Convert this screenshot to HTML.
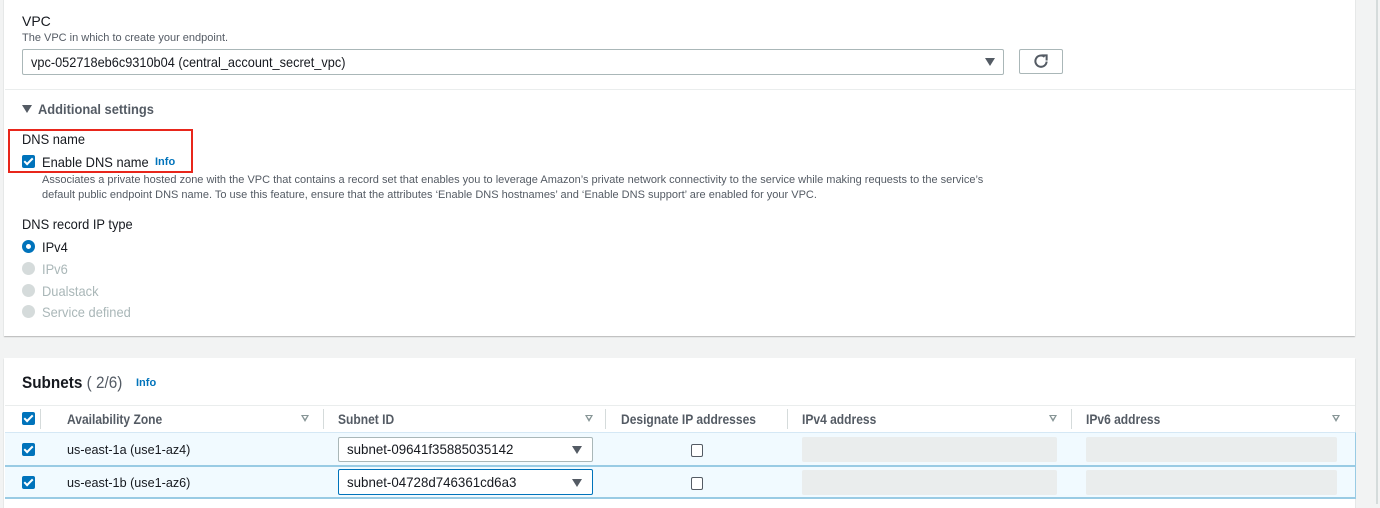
<!DOCTYPE html>
<html><head><meta charset="utf-8"><style>
*{box-sizing:border-box;margin:0;padding:0}
body{width:1380px;height:504px;overflow:hidden;background:#f2f3f3;font-family:"Liberation Sans",sans-serif;color:#16191f;position:relative}
.a{position:absolute;white-space:nowrap;transform-origin:0 50%}
.panel{position:absolute;background:#fff;box-shadow:0 1px 1px rgba(0,0,0,.25)}
.cb{position:absolute;width:13px;height:13px;background:#0073bb;border-radius:2px}
.cb:after{content:"";position:absolute;left:4px;top:1px;width:3px;height:7px;border:solid #fff;border-width:0 2px 2px 0;transform:rotate(45deg)}
.rad{position:absolute;width:13px;height:13px;border-radius:50%;background:#d5dbdb}
.n{font-weight:bold;color:#545b64;font-size:14px;transform:scaleX(.86)}
.s9{transform:scaleX(.92)}
.sel{position:absolute;border:1px solid #aab7b8;border-radius:2px;background:#fff;font-size:14px;padding-left:8px}
.sel span{display:inline-block;transform-origin:0 50%}
.tri{position:absolute;width:0;height:0;border-left:5px solid transparent;border-right:5px solid transparent;border-top:8px solid #545b64}
.ft{position:absolute;width:0;height:0;border-left:4px solid transparent;border-right:4px solid transparent;border-top:7px solid #879596}
.ft:after{content:"";position:absolute;left:-2px;top:-6px;border-left:2px solid transparent;border-right:2px solid transparent;border-top:3px solid #fff}
.sep{position:absolute;width:1px;height:20px;background:#d5dbdb}
.gray{position:absolute;background:#eaeded;border-radius:2px}
.box{position:absolute;width:12px;height:13px;border:1px solid #545b64;border-radius:2px;background:#fff}
</style></head><body>
<div class="panel" style="left:4px;top:-2px;width:1351px;height:338px"></div>
<div style="position:absolute;left:1376px;top:0;width:2px;height:504px;background:#d5dbdb"></div>
<div class="a" style="left:22px;top:13px;font-size:14px">VPC</div>
<div class="a" style="left:22px;top:32px;font-size:11px;color:#545b64">The VPC in which to create your endpoint.</div>
<div class="sel" style="left:22px;top:49px;width:982px;height:26px;line-height:24px"><span style="transform:scaleX(.91)">vpc-052718eb6c9310b04 (central_account_secret_vpc)</span></div>
<div class="tri" style="left:985px;top:58px"></div>
<div style="position:absolute;left:1019px;top:49px;width:44px;height:25px;border:1px solid #aab7b8;border-radius:2px;background:#fff"></div>
<svg class="a" style="left:1032px;top:52px" width="18" height="18" viewBox="0 0 16 16"><path d="M13 8.5a5 5 0 1 1-1.8-4.2" fill="none" stroke="#545b64" stroke-width="1.8"/><path d="M8.5 3h4.5V7.5" fill="none" stroke="#545b64" stroke-width="1.8"/></svg>
<div style="position:absolute;left:5px;top:89px;width:1350px;height:1px;background:#eaeded"></div>
<div class="tri" style="left:22px;top:105px"></div>
<div class="a s9" style="left:38px;top:101px;font-size:14px;font-weight:bold;color:#545b64">Additional settings</div>
<div style="position:absolute;left:8px;top:129px;width:185px;height:44px;border:2px solid #e8261b"></div>
<div class="a s9" style="left:22px;top:131px;font-size:14px">DNS name</div>
<div class="cb" style="left:22px;top:155px"></div>
<div class="a s9" style="left:42px;top:154px;font-size:14px">Enable DNS name</div>
<div class="a" style="left:155px;top:156px;font-size:11px;font-weight:bold;color:#0073bb">Info</div>
<div class="a" style="left:42px;top:173px;font-size:11px;color:#545b64;line-height:15px">Associates a private hosted zone with the VPC that contains a record set that enables you to leverage Amazon’s private network connectivity to the service while making requests to the service’s<br>default public endpoint DNS name. To use this feature, ensure that the attributes ‘Enable DNS hostnames’ and ‘Enable DNS support’ are enabled for your VPC.</div>
<div class="a s9" style="left:22px;top:216px;font-size:14px">DNS record IP type</div>
<div style="position:absolute;left:22px;top:240px;width:13px;height:13px;border-radius:50%;border:4px solid #0073bb;background:#fff"></div>
<div class="a s9" style="left:42px;top:239px;font-size:14px">IPv4</div>
<div class="rad" style="left:22px;top:262px"></div><div class="a s9" style="left:42px;top:261px;font-size:14px;color:#aab7b8">IPv6</div>
<div class="rad" style="left:22px;top:284px"></div><div class="a s9" style="left:42px;top:283px;font-size:14px;color:#aab7b8">Dualstack</div>
<div class="rad" style="left:22px;top:305px"></div><div class="a s9" style="left:42px;top:304px;font-size:14px;color:#aab7b8">Service defined</div>

<div class="panel" style="left:4px;top:358px;width:1351px;height:150px"></div>
<div class="a" style="left:22px;top:373px;font-size:17px;font-weight:bold;transform:scaleX(.9)">Subnets <span style="font-weight:normal;color:#545b64">( 2/6)</span></div>
<div class="a" style="left:136px;top:377px;font-size:11px;font-weight:bold;color:#0073bb">Info</div>
<div style="position:absolute;left:5px;top:405px;width:1350px;height:1px;background:#eaeded"></div>
<div class="cb" style="left:22px;top:412px"></div>
<div class="sep" style="left:40px;top:409px"></div>
<div class="a n" style="left:67px;top:411px">Availability Zone</div><div class="ft" style="left:301px;top:415px"></div>
<div class="sep" style="left:323px;top:409px"></div>
<div class="a n" style="left:338px;top:411px">Subnet ID</div><div class="ft" style="left:585px;top:415px"></div>
<div class="sep" style="left:605px;top:409px"></div>
<div class="a n" style="left:621px;top:411px">Designate IP addresses</div>
<div class="sep" style="left:787px;top:409px"></div>
<div class="a n" style="left:802px;top:411px">IPv4 address</div><div class="ft" style="left:1049px;top:415px"></div>
<div class="sep" style="left:1071px;top:409px"></div>
<div class="a n" style="left:1086px;top:411px">IPv6 address</div><div class="ft" style="left:1332px;top:415px"></div>

<div style="position:absolute;left:5px;top:432px;width:1351px;height:66px;background:#f1faff;border-top:1px solid #d5e8f5;border-right:1px solid #99cbe4"></div>
<div style="position:absolute;left:5px;top:465px;width:1351px;height:2px;background:#99cbe4"></div>
<div style="position:absolute;left:5px;top:497px;width:1351px;height:2px;background:#99cbe4"></div>
<div class="cb" style="left:22px;top:443px"></div>
<div class="a" style="left:67px;top:442px;font-size:13px;transform:scaleX(.97)">us-east-1a (use1-az4)</div>
<div class="sel" style="left:338px;top:437px;width:255px;height:25px;line-height:23px"><span style="transform:scaleX(.95)">subnet-09641f35885035142</span></div><div class="tri" style="left:572px;top:446px"></div>
<div class="box" style="left:691px;top:444px"></div>
<div class="gray" style="left:802px;top:437px;width:255px;height:25px"></div>
<div class="gray" style="left:1086px;top:437px;width:251px;height:25px"></div>
<div class="cb" style="left:22px;top:476px"></div>
<div class="a" style="left:67px;top:475px;font-size:13px;transform:scaleX(.97)">us-east-1b (use1-az6)</div>
<div class="sel" style="left:338px;top:469px;width:255px;height:26px;line-height:24px;border-color:#0073bb"><span style="transform:scaleX(.95)">subnet-04728d746361cd6a3</span></div><div class="tri" style="left:572px;top:479px"></div>
<div class="box" style="left:691px;top:477px"></div>
<div class="gray" style="left:802px;top:470px;width:255px;height:25px"></div>
<div class="gray" style="left:1086px;top:470px;width:251px;height:25px"></div>
</body></html>
